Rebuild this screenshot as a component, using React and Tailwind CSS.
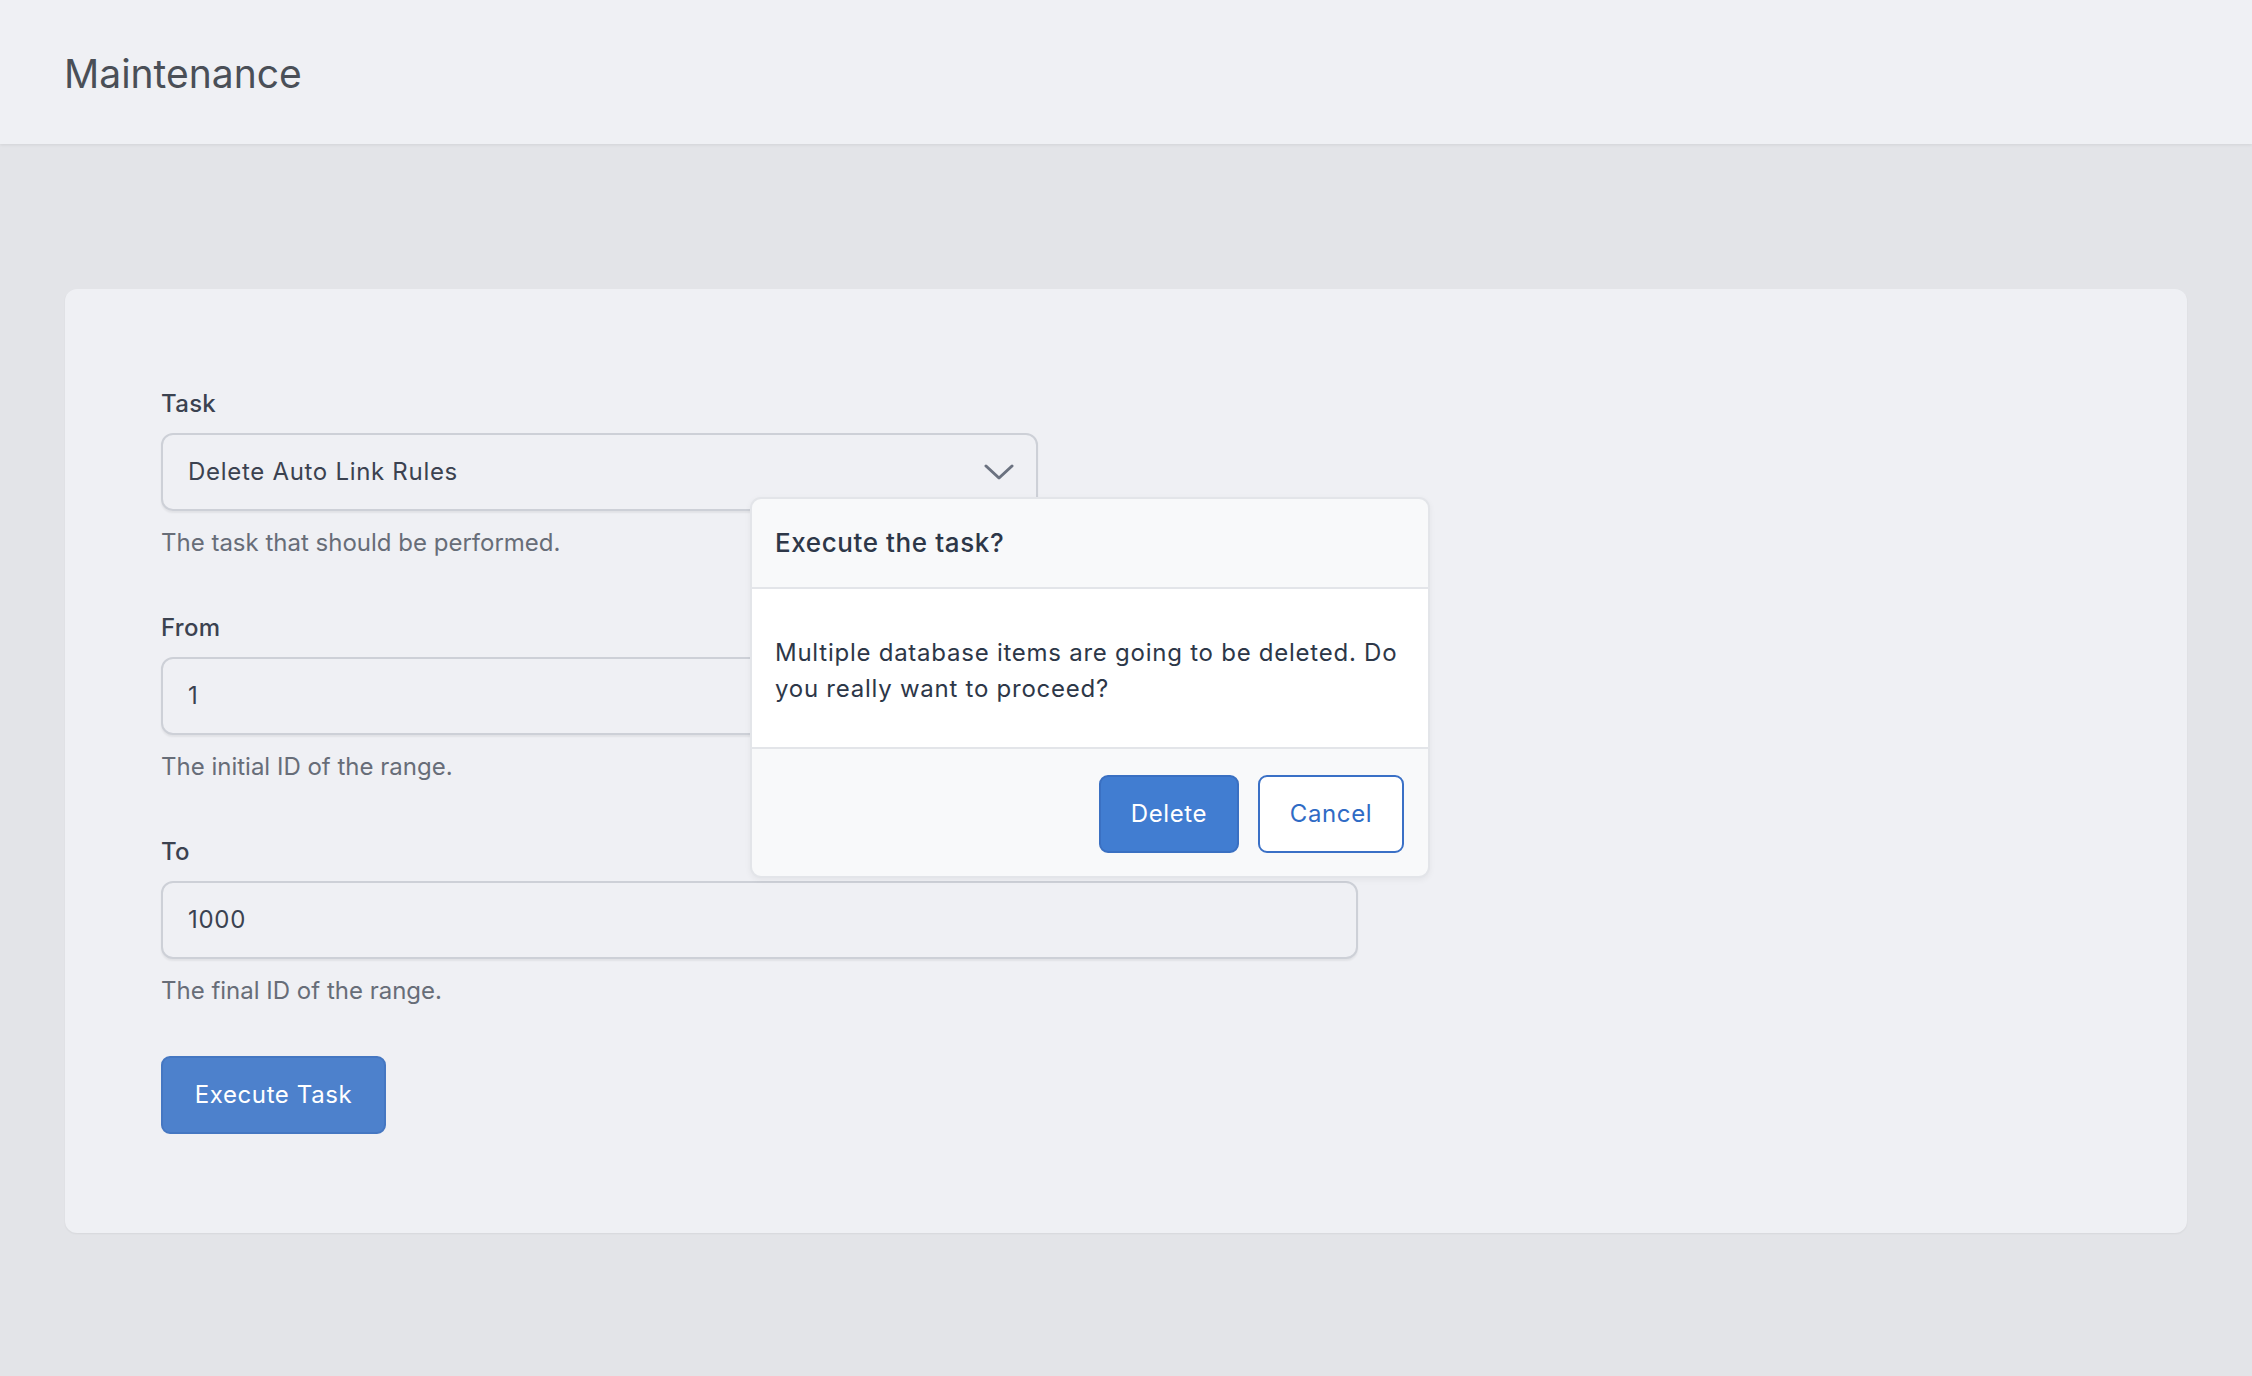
import React from "react";

const Field = ({ label, help, children }) => (
    <div className="flex flex-col">
        <label className="text-[24px] leading-[36px] font-medium text-[#3b4250] tracking-[0.3px]">{label}</label>
        <div className="mt-[11px]">{children}</div>
        <p className="mt-[14px] text-[24px] leading-[36px] text-[#676d78]">{help}</p>
    </div>
);

const inputClass =
    "h-[78px] rounded-[12px] border-2 border-[#cdd0d7] bg-[#eff0f4] px-[25px] flex items-center text-[24px] tracking-[0.7px] text-[#3b4250] shadow-[0_2px_2px_rgba(0,0,0,0.06)]";

const App = () => {
    return (
        <div className="min-h-screen bg-[#e3e4e8] font-['Inter',sans-serif] pb-[140px]">
            <header className="h-[144px] bg-[#eff0f4] px-[64px] pt-[5px] flex items-center shadow-[0_1px_3px_rgba(0,0,0,0.08)]">
                <h1 className="text-[39px] text-[#4a4f57]">Maintenance</h1>
            </header>

            <main className="pt-[145px] px-[65px]">
                <div className="relative rounded-[12px] bg-[#eff0f4] shadow-[0_1px_2px_rgba(0,0,0,0.06)] px-[96px] pt-[97px] pb-[99px]">
                    <div className="flex flex-col gap-[49px]">
                        <Field label="Task" help="The task that should be performed.">
                            <div className={`${inputClass} w-[877px] justify-between pr-[22px]`}>
                                <span>Delete Auto Link Rules</span>
                                <svg width="30" height="16" viewBox="0 0 30 16" fill="none">
                                    <path
                                        d="M2 2l13 12L28 2"
                                        stroke="#6b7280"
                                        strokeWidth="3"
                                        strokeLinecap="round"
                                        strokeLinejoin="round"
                                    />
                                </svg>
                            </div>
                        </Field>
                        <Field label="From" help="The initial ID of the range.">
                            <div className={`${inputClass} w-[1197px]`}>1</div>
                        </Field>
                        <Field label="To" help="The final ID of the range.">
                            <div className={`${inputClass} w-[1197px]`}>1000</div>
                        </Field>
                    </div>

                    <button className="mt-[47px] h-[78px] w-[225px] rounded-[9px] border-2 border-[#4577c2] bg-[#4d81cc] text-[24px] tracking-[0.6px] text-white">
                        Execute Task
                    </button>

                    <div className="absolute left-[685px] top-[208px] w-[680px] overflow-hidden rounded-[11px] border-2 border-[#e3e5e9] bg-[#f8f9fa] shadow-[0_2px_6px_rgba(0,0,0,0.05)]">
                        <div className="px-[23px] py-[26px] border-b-2 border-[#e3e5e9]">
                            <h2 className="text-[26px] leading-[36px] font-medium tracking-[0.6px] text-[#2d3748]">Execute the task?</h2>
                        </div>
                        <div className="bg-white px-[23px] pt-[46px] pb-[40px] border-b-2 border-[#e3e5e9]">
                            <p className="text-[24px] leading-[36px] tracking-[0.75px] text-[#2d3748] whitespace-nowrap">
                                Multiple database items are going to be deleted. Do
                                <br />
                                you really want to proceed?
                            </p>
                        </div>
                        <div className="flex justify-end gap-[19px] px-[24px] pt-[26px] pb-[23px]">
                            <button className="h-[78px] w-[140px] rounded-[9px] border-2 border-[#3a70c2] bg-[#417dd1] text-[24px] tracking-[0.6px] text-white">
                                Delete
                            </button>
                            <button className="h-[78px] w-[146px] rounded-[9px] border-2 border-[#3a70c6] bg-white text-[24px] tracking-[0.6px] text-[#2f6bc5]">
                                Cancel
                            </button>
                        </div>
                    </div>
                </div>
            </main>
        </div>
    );
};

export default App;
